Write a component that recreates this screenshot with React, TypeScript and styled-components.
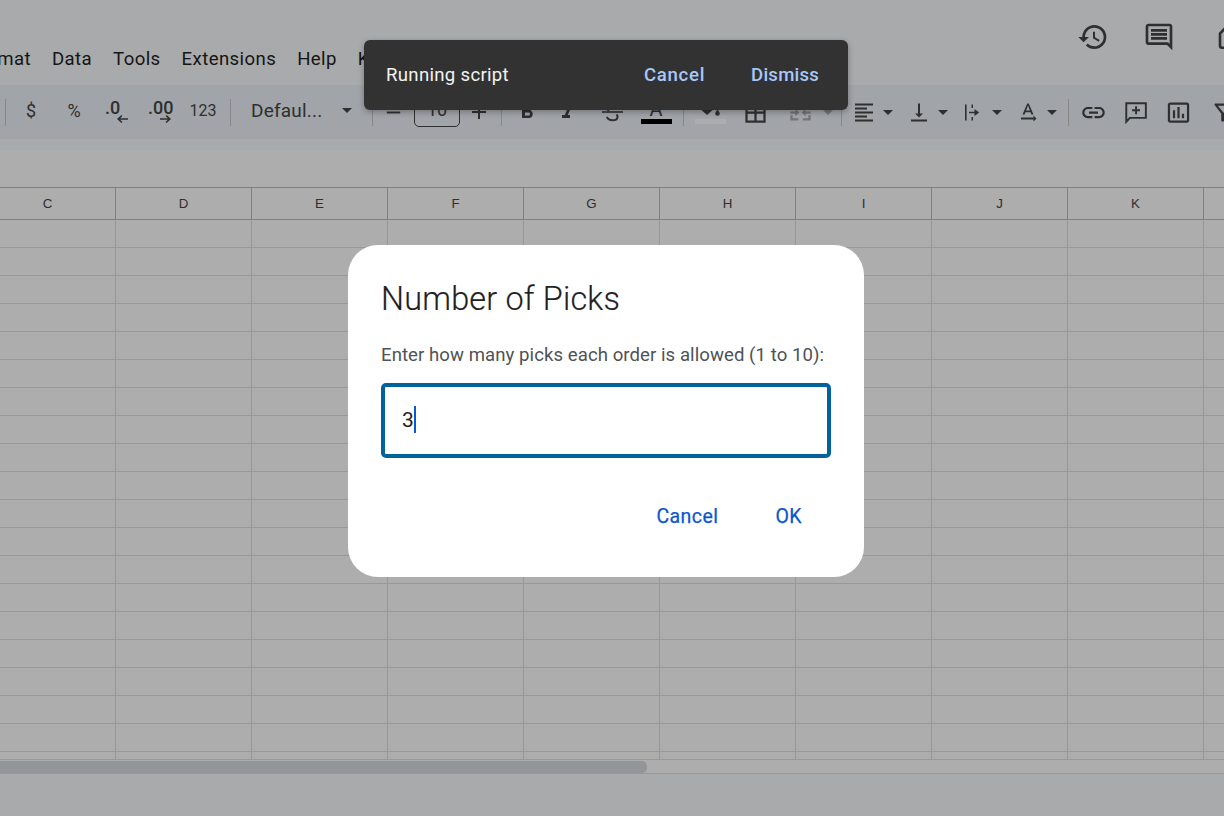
import React from "react";
import styled, { createGlobalStyle } from "styled-components";
import {
  MdAdd,
  MdFormatAlignLeft,
  MdFormatBold,
  MdFormatItalic,
  MdHistory,
  MdInsertChartOutlined,
  MdLink,
  MdOutlineBorderAll,
  MdOutlineComment,
  MdOutlineFilterAlt,
  MdRemove,
  MdTextRotationNone,
  MdVerticalAlignBottom,
} from "react-icons/md";

const GlobalStyle = createGlobalStyle`
  html, body {
    margin: 0;
    padding: 0;
    background: #fff;
  }
  body {
    font-family: Roboto, "Liberation Sans", sans-serif;
  }
`;

const Page = styled.div`
  position: relative;
  width: 1224px;
  height: 816px;
  overflow: hidden;
  display: flex;
  flex-direction: column;
  background: #fff;
`;

const Header = styled.header`
  height: 85px;
  flex: none;
  display: flex;
  justify-content: space-between;
  background: #f9fbfd;
`;

const MenuBar = styled.nav`
  display: flex;
  gap: 21px;
  height: 24px;
  margin: 47px 0 0 -31px;
  font-size: 18.6px;
  line-height: 24px;
  letter-spacing: 0.4px;
  color: #1f1f1f;
  white-space: nowrap;
`;

const HeaderActions = styled.div`
  display: flex;
  margin: 21px -34px 0 0;
  color: #444746;
`;

const ActionButton = styled.div`
  width: 66px;
  height: 32px;
  display: flex;
  align-items: center;
  justify-content: center;
`;

const Toolbar = styled.div`
  height: 54px;
  flex: none;
  display: flex;
  align-items: center;
  padding-left: 5px;
  background: #edf2fa;
  color: #444746;
  white-space: nowrap;
`;

const Separator = styled.div<{ $ml?: number }>`
  width: 1px;
  height: 27px;
  flex: none;
  margin-left: ${(p) => p.$ml ?? 0}px;
  background: #c7c7c7;
`;

const Tool = styled.div<{ $w: number; $pl?: number; $muted?: boolean }>`
  width: ${(p) => p.$w}px;
  height: 32px;
  flex: none;
  box-sizing: border-box;
  padding-left: ${(p) => p.$pl ?? 0}px;
  display: flex;
  align-items: center;
  justify-content: center;
  color: ${(p) => (p.$muted ? "#a8abad" : "inherit")};
`;

const SymbolTool = styled(Tool)`
  padding-bottom: 4px;
  font-size: 18px;
`;

const FormatNumber = styled(Tool)`
  padding-bottom: 4px;
  font-size: 16px;
`;

const DecimalTool = styled(Tool)`
  flex-direction: column;
  align-items: flex-start;
  justify-content: flex-start;
  padding-top: 4px;
  font-size: 18px;
  font-weight: 500;
  line-height: 16px;
`;

const DecimalArrow = styled.span<{ $ml: number; $flip?: boolean }>`
  display: flex;
  height: 8px;
  margin: -1px 0 0 ${(p) => p.$ml}px;
  transform: ${(p) => (p.$flip ? "scaleX(-1)" : "none")};
`;

const FontSelect = styled.div`
  width: 141px;
  flex: none;
  box-sizing: border-box;
  padding: 0 20px 4px;
  display: flex;
  align-items: center;
  justify-content: space-between;
  font-size: 19px;
  letter-spacing: 0.2px;
`;

const Caret = styled.span`
  display: block;
  flex: none;
  width: 0;
  height: 0;
  border-left: 5.5px solid transparent;
  border-right: 5.5px solid transparent;
  border-top: 5.5px solid currentColor;
`;

const CaretTool = styled(Tool)`
  color: #a8abad;
`;

const SizeBox = styled.div`
  width: 46px;
  height: 31px;
  flex: none;
  box-sizing: border-box;
  margin: 0 0 0 1px;
  padding-bottom: 4px;
  position: relative;
  top: -1px;
  display: flex;
  align-items: center;
  justify-content: center;
  border: 1px solid #444746;
  border-radius: 5px;
  font-size: 18px;
  color: #444746;
`;

const ColorTool = styled(Tool)`
  flex-direction: column;
  justify-content: flex-start;
  height: 36px;
`;

const ColorLetter = styled.span`
  font-size: 20px;
  line-height: 30px;
  height: 25px;
`;

const ColorBar = styled.span<{ $color: string }>`
  display: block;
  width: 31px;
  height: 5px;
  flex: none;
  background: ${(p) => p.$color};
`;

const FillGlyph = styled.svg`
  display: block;
  flex: none;
  margin-bottom: 1px;
`;

const DropGroup = styled.div<{ $w: number; $ml?: number }>`
  width: ${(p) => p.$w}px;
  flex: none;
  margin-left: ${(p) => p.$ml ?? 0}px;
  display: flex;
  align-items: center;
  gap: 7px;
`;

const GroupIcon = styled.span`
  width: 24px;
  flex: none;
  display: flex;
  justify-content: center;
`;

const Strip = styled.div`
  height: 11px;
  flex: none;
  background: #f9fbfd;
`;

const FormulaBar = styled.div`
  height: 37px;
  flex: none;
  background: #fff;
`;

const Cols = styled.div`
  display: flex;
  margin-left: -20px;
`;

const ColumnHeader = styled(Cols)`
  height: 33px;
  flex: none;
  box-sizing: border-box;
  border-top: 1px solid #bdbdbd;
  border-bottom: 1px solid #bdbdbd;
  font-family: "Liberation Sans", Arial, sans-serif;
  font-size: 13.3px;
  color: #444746;
`;

const ColumnLabel = styled.div`
  width: 136px;
  flex: none;
  box-sizing: border-box;
  display: flex;
  align-items: center;
  justify-content: center;
  border-right: 1px solid #bdbdbd;
`;

const Rows = styled.div`
  height: 539px;
  flex: none;
  overflow: hidden;
`;

const Row = styled(Cols)`
  height: 28px;
`;

const Cell = styled.div`
  width: 136px;
  flex: none;
  box-sizing: border-box;
  border-right: 1px solid #e1e1e1;
  border-bottom: 1px solid #e1e1e1;
`;

const ScrollTrack = styled.div`
  height: 14px;
  flex: none;
  box-sizing: border-box;
  padding-top: 1px;
  border-top: 1px solid #e1e1e1;
  background: #fff;
`;

const ScrollThumb = styled.div`
  width: 647px;
  height: 12px;
  border-radius: 0 5px 5px 0;
  background: #dadce0;
`;

const Footer = styled.footer`
  flex: 1;
  border-top: 1px solid #e1e1e1;
  background: #f9fbfd;
`;

const Scrim = styled.div`
  position: absolute;
  inset: 0;
  background: rgba(0, 0, 0, 0.32);
`;

const Toast = styled.div`
  position: absolute;
  left: 364px;
  top: 40px;
  width: 484px;
  height: 70px;
  box-sizing: border-box;
  padding: 0 29px 0 22px;
  display: flex;
  align-items: center;
  border-radius: 6px;
  background: #323232;
  box-shadow: 0 2px 6px rgba(0, 0, 0, 0.3);
  font-size: 18.6px;
  letter-spacing: 0.3px;
  color: #f2f2f2;
`;

const ToastLabel = styled.span`
  margin-right: auto;
`;

const ToastAction = styled.span<{ $ls: number }>`
  margin-left: 46px;
  font-size: 18.6px;
  font-weight: 500;
  letter-spacing: ${(p) => p.$ls}px;
  color: #a8c7fa;
`;

const Dialog = styled.div`
  position: absolute;
  left: 348px;
  top: 245px;
  width: 516px;
  height: 332px;
  box-sizing: border-box;
  padding: 34px 33px 0;
  display: flex;
  flex-direction: column;
  border-radius: 30px;
  background: #fff;
`;

const Title = styled.h2`
  margin: 0;
  font-size: 32.4px;
  line-height: 40px;
  font-weight: 300;
  letter-spacing: 0.2px;
  -webkit-text-stroke: 0.2px #1f1f1f;
  color: #1f1f1f;
`;

const Prompt = styled.p`
  margin: 24px 0 0;
  font-size: 18.6px;
  line-height: 24px;
  letter-spacing: 0.06px;
  white-space: nowrap;
  color: #4f5256;
`;

const Field = styled.div`
  width: 450px;
  height: 75px;
  box-sizing: border-box;
  margin-top: 16px;
  padding: 0 0 2px 17px;
  display: flex;
  align-items: center;
  border: 4px solid #00639b;
  border-radius: 5px;
  font-size: 21px;
  color: #1f1f1f;
`;

const TextCursor = styled.span`
  display: block;
  width: 2px;
  height: 27px;
  background: #0b57d0;
`;

const DialogActions = styled.div`
  display: flex;
  justify-content: flex-end;
  gap: 57px;
  margin-top: 47px;
  padding-right: 29px;
`;

const DialogButton = styled.span`
  font-size: 19.5px;
  line-height: 24px;
  letter-spacing: 0.45px;
  -webkit-text-stroke: 0.25px #0b57d0;
  color: #0b57d0;
`;

const COLUMNS = ["C", "D", "E", "F", "G", "H", "I", "J", "K", ""];
const ROW_COUNT = 20;
const ICON = 27;

const ArrowLeft = () => (
  <svg width="11" height="8" viewBox="0 0 11 8">
    <path d="M11 3.2H3.2L5.4.9 4.3 0 0 4l4.3 4 1.1-.9-2.2-2.3H11z" fill="currentColor" />
  </svg>
);

const WrapIcon = () => (
  <svg width={ICON} height={ICON} viewBox="0 0 24 24" fill="currentColor">
    <path d="M4 4h1.6v16H4zM10.5 4H12v3.5h-1.5zM10.5 16.5H12V20h-1.5z" />
    <path d="M8 11.2h5.5V8.5l4.7 3.5-4.7 3.5v-2.7H8z" />
  </svg>
);

const MergeIcon = () => (
  <svg width={ICON} height={ICON} viewBox="0 0 24 24" fill="currentColor">
    <path d="M3 5h7v2H5v2.5H3zM14 5h7v4.5h-2V7h-5zM3 14.5h2V17h5v2H3zM19 14.5h2V19h-7v-2h5z" />
    <path d="M3 11h4.5V8.8L11 12l-3.5 3.2V13H3zM21 11h-4.5V8.8L13 12l3.5 3.2V13H21z" />
  </svg>
);

const StrikeIcon = () => (
  <svg width={ICON} height={ICON} viewBox="0 0 27 27" fill="none" stroke="currentColor" strokeWidth="2">
    <path d="M3 13h21" strokeWidth="1.6" />
    <path d="M19 7.5c-.8-2-2.7-3.2-5.5-3.2-3.3 0-5.5 1.7-5.5 4.2 0 1.5.8 2.6 2 3.3" />
    <path d="M17.5 15.5c.7.6 1 1.3 1 2.2 0 2.2-2.1 3.6-5 3.6-2.8 0-4.8-1.2-5.6-3.4" />
  </svg>
);

const AddCommentIcon = () => (
  <svg width={ICON} height={ICON} viewBox="0 0 24 24" fill="none" stroke="currentColor" strokeWidth="1.7">
    <path d="M3.8 3.8h17.4v13H7l-3.2 3.4z" />
    <path d="M12.5 6.5v7M9 10h7" />
  </svg>
);

const MeetIcon = () => (
  <svg width="32" height="32" viewBox="0 0 32 32" fill="none" stroke="currentColor" strokeWidth="2.6">
    <path d="M15.5 7.8h20v19H13a2 2 0 0 1-2-2V12.5z" />
  </svg>
);

const App: React.FC = () => {
  return (
    <Page>
      <GlobalStyle />
      <Header>
        <MenuBar>
          <span>Format</span>
          <span>Data</span>
          <span>Tools</span>
          <span>Extensions</span>
          <span>Help</span>
          <span>Kite</span>
        </MenuBar>
        <HeaderActions>
          <ActionButton>
            <MdHistory size={32} />
          </ActionButton>
          <ActionButton>
            <MdOutlineComment size={32} />
          </ActionButton>
          <ActionButton>
            <MeetIcon />
          </ActionButton>
        </HeaderActions>
      </Header>

      <Toolbar>
        <Separator />
        <SymbolTool $w={50}>$</SymbolTool>
        <SymbolTool $w={36}>%</SymbolTool>
        <DecimalTool $w={48} $pl={13}>
          .0
          <DecimalArrow $ml={12}>
            <ArrowLeft />
          </DecimalArrow>
        </DecimalTool>
        <DecimalTool $w={40} $pl={8}>
          .00
          <DecimalArrow $ml={12} $flip>
            <ArrowLeft />
          </DecimalArrow>
        </DecimalTool>
        <FormatNumber $w={46}>123</FormatNumber>
        <Separator $ml={4} />
        <FontSelect>
          <span>Defaul...</span>
          <Caret />
        </FontSelect>
        <Separator />
        <Tool $w={40}>
          <MdRemove size={23} />
        </Tool>
        <SizeBox>10</SizeBox>
        <Tool $w={38}>
          <MdAdd size={24} />
        </Tool>
        <Separator $ml={3} />
        <Tool $w={50}>
          <MdFormatBold size={24} />
        </Tool>
        <Tool $w={32}>
          <MdFormatItalic size={24} />
        </Tool>
        <Tool $w={56}>
          <StrikeIcon />
        </Tool>
        <ColorTool $w={32}>
          <ColorLetter>A</ColorLetter>
          <ColorBar $color="#000" />
        </ColorTool>
        <Separator $ml={11} />
        <ColorTool $w={52}>
          <FillGlyph width="27" height="24" viewBox="0 0 27 24" fill="currentColor">
            <path d="M10 4l9 9-9 8-9-8zM20.5 15.5c-1.5 2-2.3 3-2.3 4a2.3 2.3 0 0 0 4.6 0c0-1-.8-2-2.3-4z" />
          </FillGlyph>
          <ColorBar $color="#fff" />
        </ColorTool>
        <Tool $w={38}>
          <MdOutlineBorderAll size={ICON} />
        </Tool>
        <Tool $w={46} $pl={6} $muted>
          <MergeIcon />
        </Tool>
        <CaretTool $w={16}>
          <Caret />
        </CaretTool>
        <Separator $ml={5} />
        <DropGroup $w={54.5} $ml={10}>
          <GroupIcon>
            <MdFormatAlignLeft size={ICON} />
          </GroupIcon>
          <Caret />
        </DropGroup>
        <DropGroup $w={54.5}>
          <GroupIcon>
            <MdVerticalAlignBottom size={ICON} />
          </GroupIcon>
          <Caret />
        </DropGroup>
        <DropGroup $w={54.5}>
          <GroupIcon>
            <WrapIcon />
          </GroupIcon>
          <Caret />
        </DropGroup>
        <DropGroup $w={52}>
          <GroupIcon>
            <MdTextRotationNone size={ICON} />
          </GroupIcon>
          <Caret />
        </DropGroup>
        <Separator />
        <Tool $w={50}>
          <MdLink size={ICON} />
        </Tool>
        <Tool $w={34}>
          <AddCommentIcon />
        </Tool>
        <Tool $w={52}>
          <MdInsertChartOutlined size={ICON} />
        </Tool>
        <Tool $w={34} $pl={4}>
          <MdOutlineFilterAlt size={ICON} />
        </Tool>
      </Toolbar>

      <Strip />
      <FormulaBar />

      <ColumnHeader>
        {COLUMNS.map((name, i) => (
          <ColumnLabel key={i}>{name}</ColumnLabel>
        ))}
      </ColumnHeader>

      <Rows>
        {Array.from({ length: ROW_COUNT }, (_, r) => (
          <Row key={r}>
            {COLUMNS.map((_, c) => (
              <Cell key={c} />
            ))}
          </Row>
        ))}
      </Rows>

      <ScrollTrack>
        <ScrollThumb />
      </ScrollTrack>
      <Footer />

      <Scrim />

      <Toast>
        <ToastLabel>Running script</ToastLabel>
        <ToastAction $ls={0.7}>Cancel</ToastAction>
        <ToastAction $ls={0.2}>Dismiss</ToastAction>
      </Toast>

      <Dialog>
        <Title>Number of Picks</Title>
        <Prompt>Enter how many picks each order is allowed (1 to 10):</Prompt>
        <Field>
          3
          <TextCursor />
        </Field>
        <DialogActions>
          <DialogButton>Cancel</DialogButton>
          <DialogButton>OK</DialogButton>
        </DialogActions>
      </Dialog>
    </Page>
  );
};

export default App;
